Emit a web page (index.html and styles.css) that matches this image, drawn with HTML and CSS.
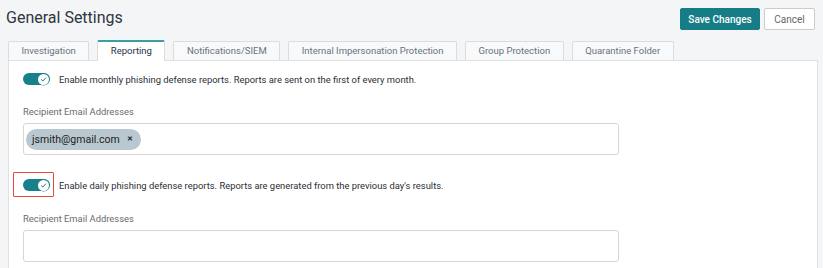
FILE: index.html
```html
<!DOCTYPE html>
<html lang="en">
<head>
  <meta charset="UTF-8" />
  <title>General Settings</title>
  <link rel="stylesheet" href="styles.css">
</head>
<body>

<div class="header">
  <h1>General Settings</h1>
  <div class="actions">
    <button class="btn btn-primary">Save Changes</button>
    <button class="btn btn-default">Cancel</button>
  </div>
</div>

<div class="tabs">
  <div class="tab">Investigation</div>
  <div class="tab active">Reporting</div>
  <div class="tab">Notifications/SIEM</div>
  <div class="tab">Internal Impersonation Protection</div>
  <div class="tab">Group Protection</div>
  <div class="tab">Quarantine Folder</div>
</div>

<div class="panel">
  <div class="setting">
    <div class="toggle-row">
      <span class="toggle-wrap">
        <span class="toggle">
          <span class="knob">
            <svg viewBox="0 0 10 10" width="7" height="7"><path d="M2 5.2 L4.2 7.2 L8 2.8" fill="none" stroke="#17808a" stroke-width="1.4" stroke-linecap="round" stroke-linejoin="round"/></svg>
          </span>
        </span>
      </span>
      <span class="toggle-label">Enable monthly phishing defense reports. Reports are sent on the first of every month.</span>
    </div>
    <div class="field">
      <div class="field-label">Recipient Email Addresses</div>
      <div class="email-input">
        <span class="chip">jsmith@gmail.com <span class="chip-x">&#x2715;</span></span>
      </div>
    </div>
  </div>

  <div class="setting second">
    <div class="toggle-row">
      <span class="toggle-wrap highlighted">
        <span class="toggle">
          <span class="knob">
            <svg viewBox="0 0 10 10" width="7" height="7"><path d="M2 5.2 L4.2 7.2 L8 2.8" fill="none" stroke="#17808a" stroke-width="1.4" stroke-linecap="round" stroke-linejoin="round"/></svg>
          </span>
        </span>
      </span>
      <span class="toggle-label">Enable daily phishing defense reports. Reports are generated from the previous day's results.</span>
    </div>
    <div class="field">
      <div class="field-label">Recipient Email Addresses</div>
      <div class="email-input"></div>
    </div>
  </div>
</div>

</body>
</html>
```

FILE: styles.css
```css
html, body {
  margin: 0; padding: 0;
  height: 100%;
  background: #f4f5f7;
  color: #333;
  font-family: Roboto, 'Noto Sans', sans-serif;
  overflow: hidden;
}

.header {
  display: flex;
  justify-content: space-between;
  align-items: flex-start;
  padding: 8px 8px 0 6px;
  height: 33px;
}

h1 {
  margin: 0;
  font-size: 16px;
  font-weight: 400;
  color: #2f3640;
  line-height: 20px;
}

.actions {
  display: flex;
  gap: 4px;
}

.btn {
  font-family: Roboto, sans-serif;
  font-size: 10px;
  height: 22px;
  padding: 0;
  border-radius: 2px;
  white-space: nowrap;
  cursor: pointer;
}

.btn-primary {
  background: #167d87;
  border: 1px solid #167d87;
  color: #fff;
  font-weight: 500;
  width: 80px;
}

.btn-default {
  background: #fff;
  border: 1px solid #ccc;
  color: #666;
  width: 51px;
}

.tabs {
  display: flex;
  gap: 8px;
  padding-left: 8px;
  height: 19px;
  position: relative;
  z-index: 2;
}

.tab {
  background: #f8f9fa;
  border: 1px solid #dcdcdc;
  border-bottom: none;
  border-radius: 2px 2px 0 0;
  padding: 0 12.5px;
  font-size: 9.5px;
  line-height: 18px;
  color: #6b7280;
}

.tab.active {
  background: #fff;
  color: #243246;
  border-top: 2px solid #3a9ea5;
  line-height: 17px;
  box-sizing: border-box;
  margin-top: -1px;
  height: 21px;
}

.panel {
  background: #fff;
  border: 1px solid #e1e1e1;
  border-bottom: none;
  margin: 0 5px 0 8px;
  padding: 12px 14px 0;
  height: 208px;
  box-sizing: border-box;
}

.toggle-row {
  display: flex;
  align-items: center;
  gap: 9px;
  height: 12px;
}

.toggle-wrap {
  position: relative;
  display: flex;
}

.toggle-wrap.highlighted::after {
  content: '';
  position: absolute;
  left: -10px; right: -4px;
  top: -7px; bottom: -6px;
  border: 1px solid #e5483f;
  border-radius: 1px;
}

.toggle {
  width: 27px;
  height: 12px;
  border-radius: 6px;
  background: #17808a;
  display: flex;
  justify-content: flex-end;
  align-items: center;
  padding-right: 1px;
  box-sizing: border-box;
}

.knob {
  width: 11px;
  height: 11px;
  border-radius: 50%;
  background: #fff;
  box-shadow: 0 0 0 0.5px #17808a;
  display: flex;
  align-items: center;
  justify-content: center;
}

.toggle-label {
  font-size: 9.4px;
  color: #2a2f36;
}

.field {
  margin-top: 21px;
}

.field-label {
  font-size: 9.4px;
  color: #6b6b6b;
  line-height: 12px;
  margin-bottom: 5px;
}

.email-input {
  width: 596px;
  height: 32px;
  box-sizing: border-box;
  border: 1px solid #d6d6d6;
  border-radius: 3px;
  display: flex;
  align-items: center;
  padding-left: 2px;
}

.chip {
  background: #b9c8d0;
  border-radius: 11px;
  height: 21px;
  padding: 0 8px 0 6px;
  display: flex;
  align-items: center;
  gap: 7px;
  font-size: 10.5px;
  color: #222;
}

.chip-x {
  font-size: 7px;
  font-weight: 900;
}

.setting.second {
  margin-top: 24px;
}

.setting.second .field {
  margin-top: 22px;
}
```
